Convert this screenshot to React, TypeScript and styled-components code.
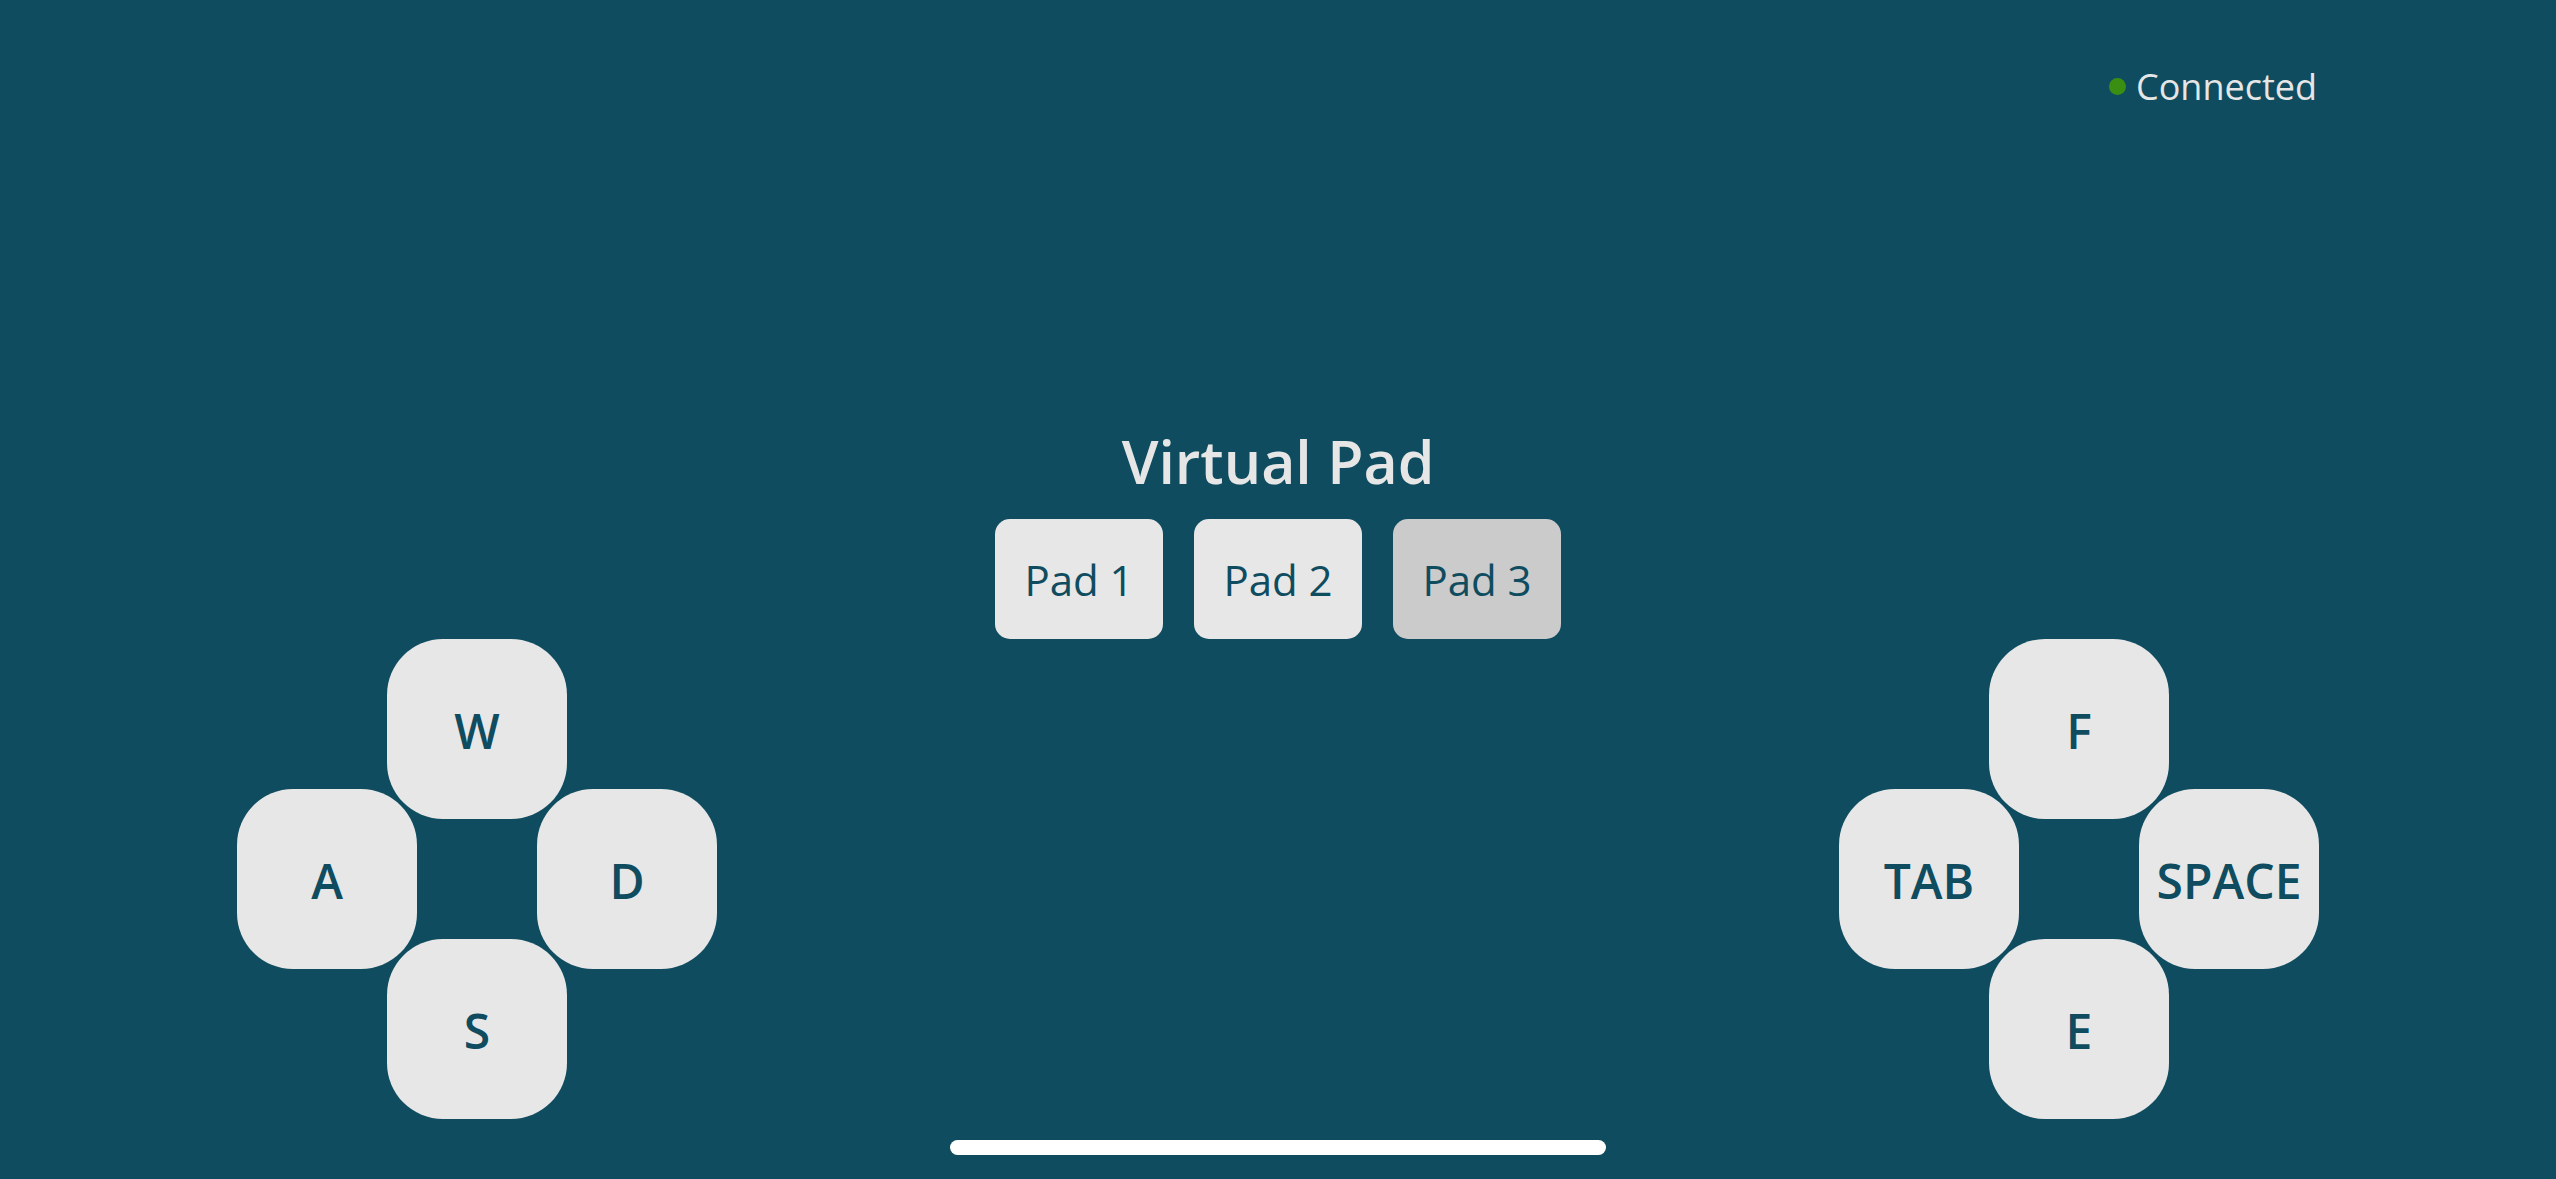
import React from "react";
import styled, { createGlobalStyle } from "styled-components";

const BG = "#0f4c5f";
const LIGHT = "#e6e6e6";

const Global = createGlobalStyle`
  html, body { margin: 0; padding: 0; background: ${BG}; }
  body { font-family: "Open Sans", "Noto Sans", sans-serif; }
  * { box-sizing: border-box; }
`;

const Page = styled.div`
  position: relative;
  width: 100vw;
  height: 100vh;
  overflow: hidden;
  background: ${BG};
  display: flex;
  flex-direction: column;
  padding: 0 237px 60px;
`;

const StatusRow = styled.header`
  height: 174px;
  display: flex;
  justify-content: flex-end;
  align-items: flex-start;
  padding-top: 62px;
  padding-right: 2px;
`;

const Status = styled.div`
  display: flex;
  align-items: center;
  gap: 10px;
  font-size: 36px;
  line-height: 49px;
  color: ${LIGHT};
`;

const Dot = styled.span`
  width: 17px;
  height: 17px;
  border-radius: 50%;
  background: #3a8f12;
`;

const Spacer = styled.div`
  flex: 1;
`;

const Title = styled.h1`
  margin: 0;
  text-align: center;
  font-size: 59px;
  line-height: 82px;
  font-weight: 600;
  color: ${LIGHT};
`;

const PadRow = styled.div`
  display: flex;
  justify-content: center;
  gap: 31px;
  margin-top: 17px;
`;

const PadButton = styled.button<{ $active?: boolean }>`
  width: 168px;
  height: 120px;
  border: none;
  border-radius: 15px;
  background: ${(p) => (p.$active ? "#cbcbcb" : "#e7e7e7")};
  color: ${BG};
  font-family: "Open Sans", "Noto Sans", sans-serif;
  font-size: 42px;
  font-weight: 400;
  display: flex;
  align-items: center;
  justify-content: center;
  padding: 0;
`;

const Controls = styled.div`
  display: flex;
  justify-content: space-between;
  align-items: flex-end;
`;

const Cluster = styled.div`
  display: grid;
  grid-template-columns: 150px 30px 120px 30px 150px;
  grid-template-rows: 150px 30px 120px 30px 150px;
`;

const Key = styled.button<{ $col: string; $row: string }>`
  grid-column: ${(p) => p.$col};
  grid-row: ${(p) => p.$row};
  border: none;
  border-radius: 56px;
  background: #e7e7e7;
  color: ${BG};
  font-family: "Open Sans", "Noto Sans", sans-serif;
  font-size: 48px;
  font-weight: 600;
  display: flex;
  align-items: center;
  justify-content: center;
  padding: 3px 0 0;
`;

const HomeIndicator = styled.div`
  position: absolute;
  left: 50%;
  bottom: 24px;
  width: 656px;
  height: 15px;
  margin-left: -328px;
  border-radius: 8px;
  background: #ffffff;
`;

type KeyDef = { label: string; col: string; row: string };

const makeCluster = (up: string, left: string, right: string, down: string): KeyDef[] => [
  { label: up, col: "2 / 5", row: "1 / 3" },
  { label: left, col: "1 / 3", row: "2 / 5" },
  { label: right, col: "4 / 6", row: "2 / 5" },
  { label: down, col: "2 / 5", row: "4 / 6" },
];

const leftKeys = makeCluster("W", "A", "D", "S");
const rightKeys = makeCluster("F", "TAB", "SPACE", "E");

export default function App() {
  return (
    <>
      <Global />
      <Page>
        <StatusRow>
          <Status>
            <Dot />
            Connected
          </Status>
        </StatusRow>
        <Spacer />
        <Title>Virtual Pad</Title>
        <PadRow>
          <PadButton>Pad 1</PadButton>
          <PadButton>Pad 2</PadButton>
          <PadButton $active>Pad 3</PadButton>
        </PadRow>
        <Controls>
          <Cluster>
            {leftKeys.map((k) => (
              <Key key={k.label} $col={k.col} $row={k.row}>
                {k.label}
              </Key>
            ))}
          </Cluster>
          <Cluster>
            {rightKeys.map((k) => (
              <Key key={k.label} $col={k.col} $row={k.row}>
                {k.label}
              </Key>
            ))}
          </Cluster>
        </Controls>
        <HomeIndicator />
      </Page>
    </>
  );
}
